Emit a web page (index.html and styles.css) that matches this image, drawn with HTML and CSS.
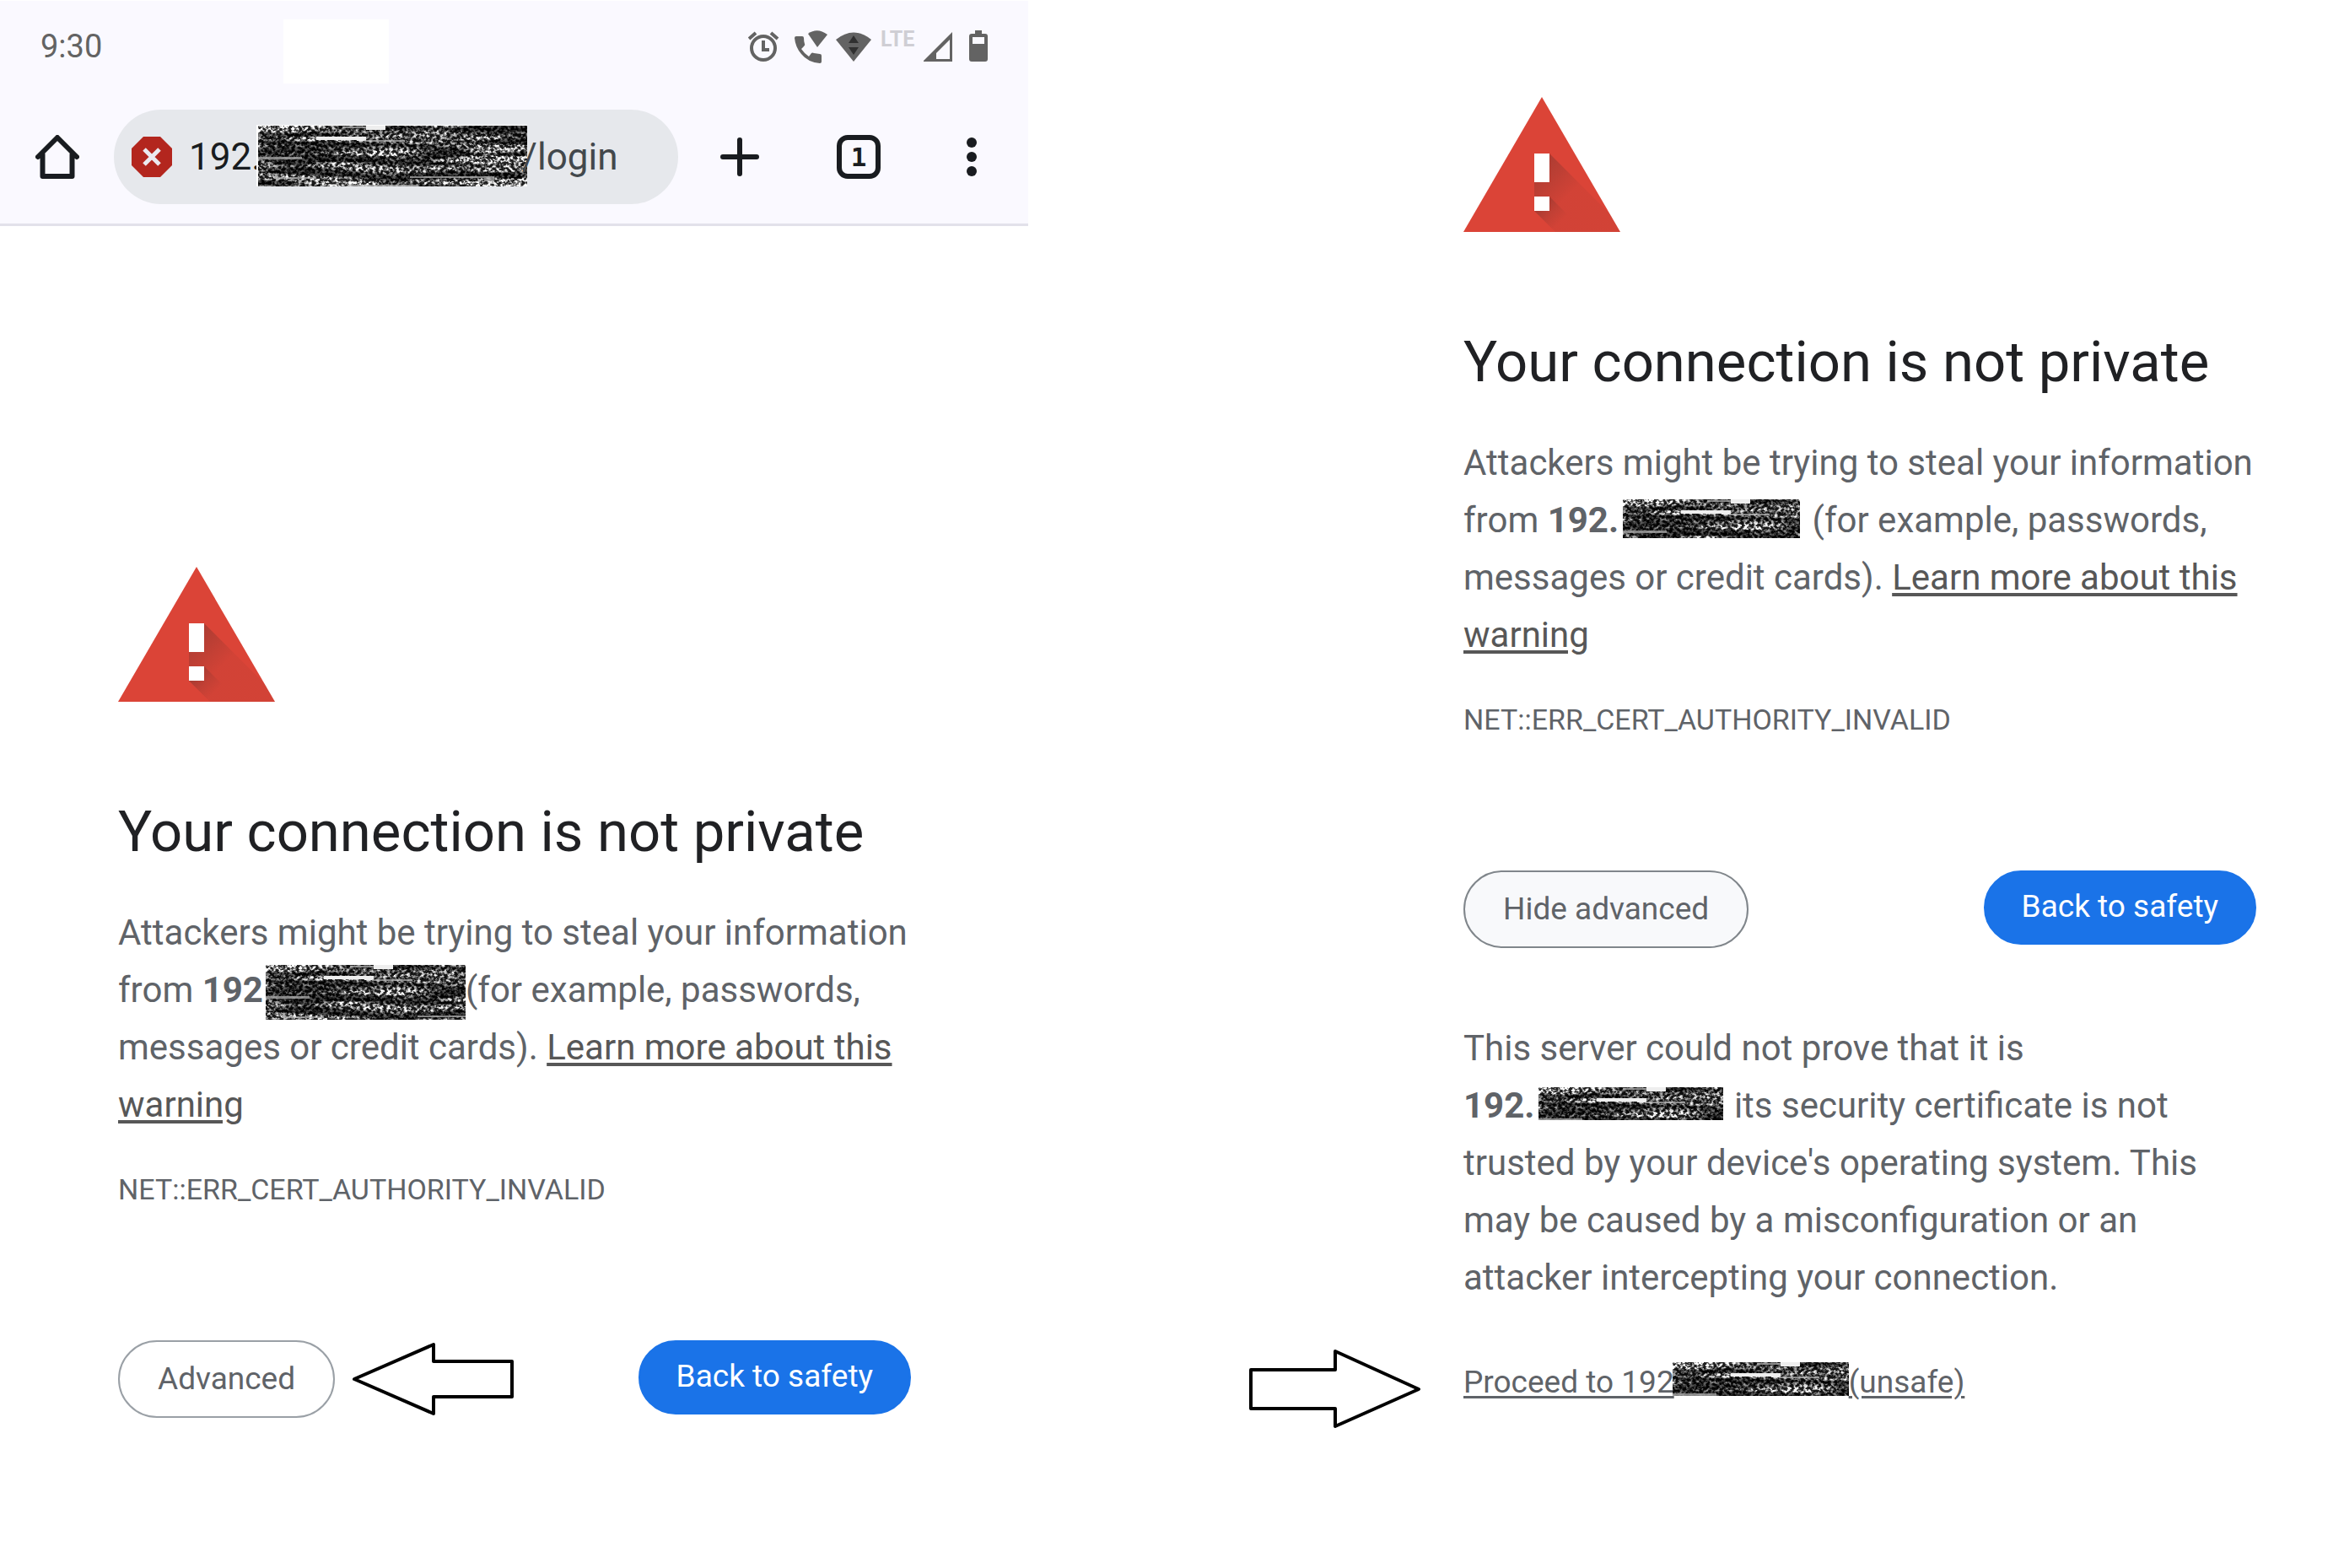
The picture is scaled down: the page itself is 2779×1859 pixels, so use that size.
FILE: index.html
```html
<!DOCTYPE html>
<html lang="en">
<head>
<meta charset="utf-8">
<meta name="viewport" content="width=device-width, initial-scale=1">
<title>Your connection is not private</title>
<link rel="stylesheet" href="styles.css">
</head>
<body>
<svg class="defs" aria-hidden="true">
  <defs>
    <filter id="grain" x="0" y="0" width="100%" height="100%" color-interpolation-filters="sRGB">
      <feTurbulence type="fractalNoise" baseFrequency="0.25 0.3" numOctaves="3" seed="7" result="fine"/>
      <feColorMatrix in="fine" values="3.4 0 0 0 -1.4  3.4 0 0 0 -1.4  3.4 0 0 0 -1.4  0 0 0 0 1" result="dots"/>
      <feTurbulence type="fractalNoise" baseFrequency="0.008 0.11" numOctaves="2" seed="4" result="wide"/>
      <feColorMatrix in="wide" values="3.5 0 0 0 -1.3  3.5 0 0 0 -1.3  3.5 0 0 0 -1.3  0 0 0 0 1" result="bands"/>
      <feComposite in="dots" in2="bands" operator="arithmetic" k1="0.8" k2="0.35" k3="0.12" k4="0"/>
    </filter>
    <linearGradient id="shade" gradientUnits="userSpaceOnUse" x1="93" y1="84" x2="125" y2="116">
      <stop offset="0" stop-color="#262626" stop-opacity=".24"/>
      <stop offset="1" stop-color="#262626" stop-opacity=".05"/>
    </linearGradient>
    <linearGradient id="shade-dot" gradientUnits="userSpaceOnUse" x1="93" y1="126" x2="115" y2="148">
      <stop offset="0" stop-color="#262626" stop-opacity=".2"/>
      <stop offset="1" stop-color="#262626" stop-opacity="0"/>
    </linearGradient>
    <clipPath id="tri"><path d="M93 0 186 160H0z"/></clipPath>
    <symbol id="warning" viewBox="0 0 186 160">
      <path fill="#db4437" d="M93 0 186 160H0z"/>
      <g clip-path="url(#tri)">
        <path fill="url(#shade)" d="M102 67 196 161H110L84 135V101z"/>
        <path fill="url(#shade-dot)" d="M102 118 145 161H110L84 135z"/>
      </g>
      <path fill="#fff" d="M84 67h18v34H84zM84 118h18v17H84z"/>
    </symbol>
    <g id="marks">
      <rect width="320" height="72" fill="#000" filter="url(#grain)"/>
      <path fill="#eee" d="M128 0h23v5h-23zM69 13h48v4H69zM117 13h11v5h-11z"/>
      <path fill="#bbb" opacity=".7" d="M0 37h52v3H0zM100 1h28v2h-28zM126 17h48v2h-48zM20 57h3v6h-3zM23 61h46v2H23zM108 70h82v2h-82zM180 60h90v2h-90zM268 60h12v6h-12z"/>
    </g>
  </defs>
</svg>

<div class="screen">
  <header class="browser">
    <div class="status">
      <span class="clock">9:30</span>
      <span class="patch"></span>
      <div class="status-icons">
        <svg width="47" height="40" viewBox="0 0 47 40" fill="none" stroke="#636363" aria-hidden="true">
          <circle cx="18" cy="22" r="14" stroke-width="4"/>
          <path stroke-width="4" d="M18 13v11h7"/>
          <path stroke-width="4" d="M1 11 9 4M35 11 27 4"/>
        </svg>
        <svg width="41" height="40" viewBox="0 0 41 40" fill="#636363" aria-hidden="true">
          <path d="M16 5Q27-3 39 6L27 21z"/>
          <path d="M2 8h7q2 0 2 2 0 4 1 7 1 1-1 3l-3 3q4 6 9 9l3-4q1-1 3 0l7 1q2 0 2 2v7q0 2-2 2Q16 39 8 29 1 21 0 10 0 8 2 8z"/>
        </svg>
        <svg width="45" height="40" viewBox="0 0 45 40" aria-hidden="true">
          <path fill="#636363" d="M0 12Q21-5 42 12L21 38z"/>
          <path fill="#303030" d="M21 7 27 16H15zM15 21h12l-6 9z"/>
        </svg>
        <span class="network">LTE</span>
        <svg width="46" height="40" viewBox="0 0 46 40" aria-hidden="true">
          <path fill="#636363" fill-rule="evenodd" d="M34 3V38H-1zM31 12 15 28v7h16z"/>
        </svg>
        <svg width="22" height="40" viewBox="0 0 22 40" aria-hidden="true">
          <path fill="#636363" fill-rule="evenodd" d="M7 1h8v4h4q3 0 3 3v27q0 3-3 3H3q-3 0-3-3V8q0-3 3-3h4zM4 9v8h14V9z"/>
        </svg>
      </div>
    </div>
    <div class="toolbar">
      <button class="tool" type="button" aria-label="Home">
        <svg width="52" height="52" viewBox="0 0 52 52" fill="none" stroke="#191c20" stroke-width="6" stroke-linejoin="round" stroke-linecap="round"><path d="M3 26 26 3 49 26M8.500 23V49h35V23"/></svg>
      </button>
      <div class="address">
        <svg width="48" height="48" viewBox="0 0 48 48" aria-hidden="true"><path fill="#b3261e" d="M14 0h20l14 14v20L34 48H14L0 34V14z"/><path stroke="#ebe9ef" stroke-width="5" d="M15 15 33 33M33 15 15 33"/></svg>
        <div class="url"><span>192.</span><svg class="marks marks-url" aria-hidden="true"><use href="#marks"/></svg><span class="path">/login</span></div>
      </div>
      <div class="actions">
        <button class="tool" type="button" aria-label="New tab">
          <svg width="46" height="46" viewBox="0 0 46 46" stroke="#191c20" stroke-width="6" stroke-linecap="round"><path d="M23 3v40M3 23h40"/></svg>
        </button>
        <button class="tool tabs" type="button" aria-label="Open tabs">1</button>
        <button class="tool" type="button" aria-label="More">
          <svg width="32" height="52" viewBox="0 0 32 52" fill="#191c20"><circle cx="16" cy="9" r="6"/><circle cx="16" cy="26" r="6"/><circle cx="16" cy="43" r="6"/></svg>
        </button>
      </div>
    </div>
  </header>
  <main class="notice notice-first">
    <svg class="warning" aria-hidden="true"><use href="#warning"/></svg>
    <h1>Your connection is not private</h1>
    <p class="lead">Attackers might be trying to steal your information from <b class="host">192<svg class="marks marks-tall" aria-hidden="true"><use href="#marks"/></svg></b>(for example, passwords, messages or credit cards). <a href="#">Learn more about this warning</a></p>
    <p class="code">NET::ERR_CERT_AUTHORITY_INVALID</p>
    <div class="buttons">
      <button class="btn" type="button">Advanced</button>
      <svg class="arrow-left" width="192" height="88" viewBox="0 0 192 88" fill="#fff" stroke="#000" stroke-width="4" stroke-linejoin="round" aria-hidden="true"><path d="M2 44 96 3V23H189V65H96V85z"/></svg>
      <button class="btn btn-primary" type="button">Back to safety</button>
    </div>
  </main>
</div>

<div class="screen screen-second">
  <svg class="arrow-right" width="204" height="96" viewBox="0 0 204 96" fill="#fff" stroke="#000" stroke-width="4" stroke-linejoin="round" aria-hidden="true"><path d="M2 25H102V3L201 48 102 92V71H2z"/></svg>
  <section class="notice notice-second">
    <svg class="warning" aria-hidden="true"><use href="#warning"/></svg>
    <h1>Your connection is not private</h1>
    <p class="lead">Attackers might be trying to steal your information from <b class="host">192.<svg class="marks marks-mid" aria-hidden="true"><use href="#marks"/></svg></b> (for example, passwords, messages or credit cards). <a href="#">Learn more about this warning</a></p>
    <p class="code">NET::ERR_CERT_AUTHORITY_INVALID</p>
    <div class="buttons">
      <button class="btn btn-open" type="button">Hide advanced</button>
      <button class="btn btn-primary" type="button">Back to safety</button>
    </div>
    <p class="details">This server could not prove that it is <b class="host">192.<svg class="marks marks-low" aria-hidden="true"><use href="#marks"/></svg></b> its security certificate is not trusted by your device's operating system. This may be caused by a misconfiguration or an attacker intercepting your connection.</p>
    <p class="proceed"><a href="#">Proceed to 192<svg class="marks marks-link" aria-hidden="true"><use href="#marks"/></svg>(unsafe)</a></p>
  </section>
</div>
</body>
</html>
```
FILE: styles.css
```css
* {
  box-sizing: border-box;
}

body {
  margin: 0;
  min-height: 100vh;
  display: grid;
  grid-template-columns: 1219fr 1560fr;
  align-items: start;
  background: #fff;
  color: #5f6368;
  font-family: Roboto, sans-serif;
  font-size: 42px;
  line-height: 68px;
}

button {
  font-family: inherit;
  margin: 0;
}

h1,
p {
  margin: 0;
}

svg {
  display: block;
  flex: none;
}

.defs {
  position: absolute;
  width: 0;
  height: 0;
}

/* Browser chrome */

.browser {
  border-top: 1px solid #fff;
  border-bottom: 3px solid #e2e1ea;
  background: #faf9ff;
}

.status {
  display: flex;
  align-items: center;
  height: 108px;
  padding: 0 48px;
}

.clock {
  width: 288px;
  color: #636363;
  font-size: 38px;
}

.patch {
  width: 125px;
  height: 76px;
  margin-top: 11px;
  background: #fff;
}

.status-icons {
  display: flex;
  gap: 8px;
  margin-left: auto;
}

.network {
  width: 43px;
  color: #cfced4;
  font-size: 25px;
  font-weight: 700;
  line-height: 24px;
}

.toolbar {
  display: flex;
  align-items: center;
  height: 156px;
  padding: 0 51px 2px 42px;
}

.tool {
  padding: 0;
  border: 0;
  background: none;
  color: #191c20;
}

.address {
  display: flex;
  flex: 1;
  align-items: center;
  height: 112px;
  margin: 0 50px 0 41px;
  padding: 0 21px;
  border-radius: 56px;
  background: #e6e8ec;
}

.url {
  display: flex;
  align-items: center;
  margin-left: 20px;
  color: #191c20;
  font-size: 44px;
}

.path {
  color: #43484c;
}

.actions {
  display: flex;
  align-items: center;
  gap: 92px;
}

.tabs {
  width: 52px;
  height: 52px;
  border: 6px solid #191c20;
  border-radius: 13px;
  font-family: "DejaVu Sans Mono", monospace;
  font-size: 31px;
  font-weight: 700;
  line-height: 38px;
}

/* Scribbled-out addresses */

.marks {
  overflow: hidden;
}

.host {
  white-space: nowrap;
}

.host .marks,
.proceed .marks {
  display: inline-block;
  vertical-align: top;
}

.marks-url {
  width: 321px;
  height: 73px;
  margin: 0 -6px 4px;
  border-top: 1px solid #fff;
  border-left: 2px solid #fff;
}

.marks-tall {
  width: 237px;
  height: 65px;
  margin: 4px 0 -8px 3px;
}

.marks-mid {
  width: 210px;
  height: 46px;
  margin: 9px 4px 0 5px;
}

.marks-low {
  width: 219px;
  height: 39px;
  margin: 12px 2px 0 5px;
}

.proceed .marks-link {
  width: 209px;
  height: 40px;
  margin: -2px 0 0 -2px;
}

/* Warning page */

.notice {
  width: 100%;
  max-width: 940px;
}

.notice-first {
  margin: 404px 0 0 140px;
}

.notice-second {
  margin-bottom: 34px;
}

.screen-second {
  display: flex;
  justify-content: flex-end;
  align-items: flex-end;
  gap: 50px;
  padding: 115px 104px 0 0;
}

.warning {
  width: 186px;
  height: 160px;
}

h1 {
  margin-top: 114px;
  color: #202124;
  font-size: 67px;
  font-weight: 400;
  line-height: 80px;
}

.lead {
  margin-top: 46px;
}

a {
  color: #575757;
  text-decoration: underline;
  text-decoration-thickness: 4px;
  text-underline-offset: 4px;
}

.code {
  margin-top: 46px;
  font-size: 34px;
  line-height: 40px;
}

.buttons {
  display: flex;
  align-items: flex-start;
  margin-top: 159px;
}

.btn {
  height: 92px;
  padding: 0 45px 2px;
  border: 2px solid #9aa0a6;
  border-radius: 46px;
  background: #fff;
  color: #5f6368;
  font-size: 37px;
}

.btn-open {
  border-color: #80868b;
  background: #f8f9fb;
}

.btn-primary {
  height: 88px;
  margin-left: auto;
  padding: 0 43px 3px;
  border-color: #1a73e8;
  background: #1a73e8;
  color: #fff;
}

.arrow-left {
  margin: 2px 0 0 21px;
}

.details {
  margin-top: 85px;
}

.proceed {
  margin-top: 68px;
  font-size: 37px;
  line-height: 44px;
}

.proceed a {
  color: #5f6368;
  text-decoration-thickness: 3px;
}
```
